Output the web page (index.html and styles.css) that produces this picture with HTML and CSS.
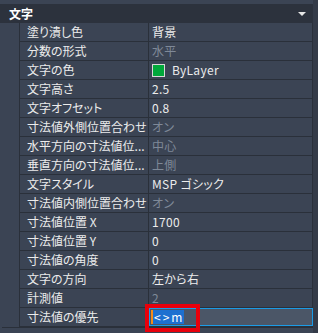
FILE: index.html
```html
<!DOCTYPE html>
<html lang="ja">
<head>
    <meta charset="UTF-8">
    <meta name="viewport" content="width=device-width, initial-scale=1.0">
    <title>プロパティ - 文字</title>
    <link rel="stylesheet" href="styles.css">
</head>
<body>

    <div class="palette">
        <div class="panel">
            <!-- カテゴリ見出し -->
            <div class="section-head">
                <span>文字</span>
                <span class="toggle"></span>
            </div>

            <div class="props">
                <div class="row"><div class="name">塗り潰し色</div><div class="value">背景</div></div>
                <div class="row"><div class="name">分数の形式</div><div class="value dim">水平</div></div>
                <div class="row"><div class="name">文字の色</div><div class="value"><span class="swatch"></span>ByLayer</div></div>
                <div class="row"><div class="name">文字高さ</div><div class="value">2.5</div></div>
                <div class="row"><div class="name">文字オフセット</div><div class="value">0.8</div></div>
                <div class="row"><div class="name">寸法値外側位置合わせ</div><div class="value dim">オン</div></div>
                <div class="row"><div class="name">水平方向の寸法値位...</div><div class="value dim">中心</div></div>
                <div class="row"><div class="name">垂直方向の寸法値位...</div><div class="value dim">上側</div></div>
                <div class="row"><div class="name">文字スタイル</div><div class="value">MSP ゴシック</div></div>
                <div class="row"><div class="name">寸法値内側位置合わせ</div><div class="value dim">オン</div></div>
                <div class="row"><div class="name">寸法値位置&nbsp;X</div><div class="value">1700</div></div>
                <div class="row"><div class="name">寸法値位置&nbsp;Y</div><div class="value">0</div></div>
                <div class="row"><div class="name">寸法値の角度</div><div class="value">0</div></div>
                <div class="row"><div class="name">文字の方向</div><div class="value">左から右</div></div>
                <div class="row"><div class="name">計測値</div><div class="value dim">2</div></div>
                <div class="row editing">
                    <div class="name">寸法値の優先</div>
                    <div class="value"><span class="cursor"></span><span class="selected">&lt;&gt;m</span></div>
                </div>
            </div>
            <div class="panel-foot"></div>
        </div>
        <div class="scrollbar"></div>
    </div>

    <!-- 注目箇所の赤枠 -->
    <div class="callout"></div>

</body>
</html>
```

FILE: styles.css
```css
body {
    margin: 0;
    width: 318px;
    height: 333px;
    overflow: hidden;
    background-color: #3b4454;
    font-family: "Noto Sans CJK JP", "Noto Sans", sans-serif;
    font-size: 12px;
    color: #ececec;
    position: relative;
}
.palette {
    display: flex;
    height: 333px;
}
.panel {
    flex: 1;
    padding-top: 4px;
    background-color: #3b4454;
}
.scrollbar {
    width: 5px;
    background-color: #343b48;
}
.section-head {
    height: 19px;
    display: flex;
    align-items: center;
    justify-content: space-between;
    padding: 0 7px 0 9px;
    background-color: #2c323d;
    font-weight: bold;
    color: #ffffff;
    line-height: 19px;
}
.toggle {
    width: 0;
    height: 0;
    border-left: 4px solid transparent;
    border-right: 4px solid transparent;
    border-top: 4px solid #e6e6e6;
}
.props {
    margin-left: 19px;
    border-left: 1px solid #2a303a;
    border-right: 1px solid #2a303a;
}
.row {
    display: grid;
    grid-template-columns: 129px 1fr;
    height: 18px;
    border-bottom: 1px solid #2a303a;
    line-height: 18px;
}
.name {
    padding-left: 7px;
    border-right: 1px solid #2a303a;
    white-space: nowrap;
    font-feature-settings: "palt";
}
.value {
    padding-left: 3px;
    display: flex;
    align-items: center;
    white-space: nowrap;
    letter-spacing: 0.3px;
    font-feature-settings: "palt";
}
.dim {
    color: #7f8998;
}
.swatch {
    width: 11px;
    height: 11px;
    margin-right: 7px;
    background-color: #00a83a;
    border: 1px solid #d8d8d8;
}
.editing .value {
    padding-left: 1px;
    margin-right: -1px;
    background-color: #4b5667;
    border: 1px solid #1b9be6;
    height: 16px;
}
.cursor {
    width: 2px;
    height: 14px;
    background-color: #f28c1a;
}
.selected {
    height: 14px;
    line-height: 14px;
    padding: 0 0 0 1px;
    letter-spacing: 2px;
    background-color: #1d70d0;
    color: #ffffff;
}
.panel-foot {
    margin-left: 2px;
    border-top: 1px solid #2a303a;
}
.callout {
    position: absolute;
    left: 145px;
    top: 304px;
    width: 47px;
    height: 20px;
    border: 4px solid #e8000b;
}
```
